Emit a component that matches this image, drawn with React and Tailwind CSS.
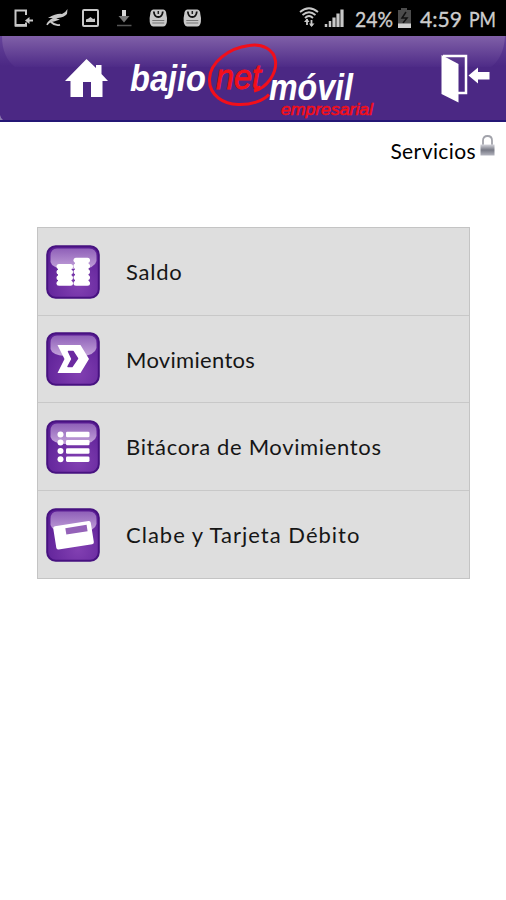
import React from 'react';

function StatusBar() {
  return (
    <div className="flex h-9 items-center bg-black">
      <svg className="block" width="506" height="36" viewBox="0 0 506 36" fill="none" stroke="#c8c8c8">
        {/* device with incoming arrow */}
        <path d="M26 15V10.500H15.500V25.500H26V22.500" strokeWidth="2" />
        <path d="M15 25.300H27" strokeWidth="2.600" />
        <path d="M33 20.500H28" strokeWidth="2" />
        <path d="M25 20.500L29.500 17V24Z" fill="#c8c8c8" stroke="none" />
        {/* swoosh */}
        <path d="M67.500 9L67 14Q64 17.500 58 18Q50 19 47 25Q51 21.500 54 21.500L60 19.500Q56 17.500 48 18Q57 13 62 14Q66 12 67.500 9Z" fill="#c8c8c8" stroke="none" />
        <path d="M47 24.800Q50 19 58 17M51 22Q55 26 60 24.800" strokeWidth="1.800" />
        {/* picture */}
        <rect x="83" y="10" width="15" height="16" rx="1" strokeWidth="2" />
        <path d="M86 22V19.500L88.500 18.500L90.500 17L93 19L95 18.500V22Z" fill="#c8c8c8" stroke="none" />
        {/* download */}
        <path d="M122 10H126V16H122Z" fill="#d6d6d6" stroke="none" />
        <path d="M118.500 16H129.500L124 22.500Z" fill="#777" stroke="none" />
        <path d="M117 25.500H131.500" stroke="#555" strokeWidth="1.500" />
        {[158.300, 192.300].map((x) => (
          <g key={x} transform={`translate(${x} 18)`} stroke="none">
            <path d="M-5 -8.500H5Q8 -8 8 -4L8.700 0Q9 8.500 5 8.500H-5Q-9 8.500 -8.700 0L-8 -4Q-8 -8 -5 -8.500Z" fill="#c8c8c8" />
            <path d="M-4.500 -6.500Q-4 -1 0 -1T4.500 -6.500" stroke="#111" strokeWidth="1.800" />
            <path d="M0 -7V-4" stroke="#222" strokeWidth="1.500" />
            <path d="M-6 2.500H6M-6 5H6" stroke="#777" />
          </g>
        ))}
        {/* wifi with traffic arrows */}
        <path d="M300 12Q309 4.500 318 12M302.500 15Q309 9.500 315.500 15M305 18Q309 14 313 18" strokeWidth="1.800" />
        <path d="M307 19V25M311.500 20V26" strokeWidth="1.800" />
        <path d="M304 22L307 18.500L309.500 22M309 23.500L311.500 27L314.500 23.500" fill="#c8c8c8" stroke="none" />
        {/* signal */}
        <path d="M326 27V24M330 27V21" strokeWidth="2.500" />
        <path d="M334 27V17.500M338 27V13.500M342 27V9.500" strokeWidth="3.200" />
        <g fill="#cdcdcd" stroke="#cdcdcd" strokeWidth=".35" fontFamily="Lato, sans-serif" fontSize="21">
          <text x="355" y="26.500" textLength="38" lengthAdjust="spacingAndGlyphs">24%</text>
          <text x="420" y="26.500" textLength="42" lengthAdjust="spacingAndGlyphs">4:59</text>
          <text x="469" y="26.500" textLength="27" lengthAdjust="spacingAndGlyphs">PM</text>
        </g>
        {/* battery */}
        <path d="M398 10H401V8H407V10H411V28H398Z" fill="#4c4c4c" stroke="none" />
        <path d="M406 12L402 18H407L403 23" stroke="#111" strokeWidth="1.500" />
        <path d="M398 23.500H411V28H398Z" fill="#d0d0d0" stroke="none" />
      </svg>
    </div>
  );
}

function Header() {
  return (
    <header className="h-[86px] border-b-2 border-[#241675] bg-[#4b2884]">
      <svg className="block" width="506" height="84" viewBox="0 36 506 84">
        <defs>
          <linearGradient id="bar" x1="0" y1="0" x2="0" y2="1">
            <stop offset="0" stopColor="#8060a8" />
            <stop offset="1" stopColor="#4e2b87" />
          </linearGradient>
          <linearGradient id="corner" x1="0" y1="0" x2="0" y2="1">
            <stop offset="0" stopColor="#66449a" />
            <stop offset="1" stopColor="#4b2884" />
          </linearGradient>
        </defs>
        <rect x="0" y="36" width="506" height="30" fill="url(#corner)" />
        <path d="M2 36H505Q504 57 491 67H15Q2 57 2 36Z" fill="url(#bar)" />
        <path d="M0 115Q1 119 3 120H0Z" fill="#8d7aaf" />
        {/* home */}
        <path d="M86.500 59L96 68V65H101.500V74L108 81H102.500V97H91V82H83V97H70.500V81H65Z" fill="#fff" />
        {/* brand */}
        <path d="M254 91C267 88 277 73 275.500 61C274 49 262 43.500 249 45.500C229 48 210 62 209.500 79C209 96 224 104 238 104.500C251 105 263 101 269 94.500" fill="none" stroke="#f20f1a" strokeWidth="3" />
        <g fontFamily="'Liberation Sans', sans-serif" fontStyle="italic">
          <text x="130" y="91" fontSize="37" fontWeight="700" fill="#fff" textLength="76" lengthAdjust="spacingAndGlyphs">bajio</text>
          <text x="216" y="89" fontSize="35" fill="#f20f1a" stroke="#f20f1a" strokeWidth=".9" textLength="45" lengthAdjust="spacingAndGlyphs">net</text>
          <text x="269" y="100" fontSize="36" fontWeight="700" fill="#fff" textLength="84" lengthAdjust="spacingAndGlyphs">móvil</text>
          <text x="281" y="114.500" fontSize="16.500" fill="#f20f1a" stroke="#f20f1a" strokeWidth=".6" textLength="92" lengthAdjust="spacingAndGlyphs">empresarial</text>
        </g>
        {/* exit door */}
        <path d="M443 56H466V93H458" fill="none" stroke="#fff" strokeWidth="2.500" />
        <path d="M441.500 55L458.500 64V102.500L441.500 94Z" fill="#fff" />
        <path d="M468.500 75.500L478 67.500V72H489.500V79.500H478V83.500Z" fill="#fff" />
      </svg>
    </header>
  );
}

const glyphs = {
  coins: (
    <g fill="#fff">
      {[19, 24.600, 30.200, 35.800].map((y) => <rect key={y} x="10.500" y={y} width="16.500" height="5" rx="2.500" />)}
      {[12.700, 18.500, 24.300, 30.100, 35.800].map((y) => <rect key={y} x="27.500" y={y} width="16.500" height="5" rx="2.500" />)}
      <path d="M12 21H25.500V39H12ZM29 15H42.500V39H29Z" />
    </g>
  ),
  arrow: (
    <g>
      <path d="M11.500 13H34.500L43 27L34.500 41H11.500L18.500 27Z" fill="#fff" />
      <path d="M22.500 19.500H27L31.500 26.500L26 34.500H22L26 27Z" fill="#6b2aa0" stroke="#6b2aa0" strokeWidth="1.500" strokeLinejoin="round" />
    </g>
  ),
  list: (
    <g fill="#fff">
      {[14.500, 22.600, 31, 39.200].map((y) => (
        <g key={y}>
          <circle cx="14.500" cy={y} r="3" />
          <rect x="20" y={y - 2.700} width="23.500" height="5.400" rx="1.300" />
        </g>
      ))}
    </g>
  ),
  card: (
    <g transform="rotate(-9 27.500 27)">
      <rect x="8.500" y="15.500" width="38" height="23.500" rx="2" fill="#fff" />
      <path d="M20.500 19H42V25.500H20.500Z" fill="#9462b8" />
    </g>
  ),
};

function Tile({ name }) {
  return (
    <svg className="h-[54px] w-[54px] shrink-0" viewBox="0 0 54 54">
      <defs>
        <radialGradient id={`base-${name}`} cx=".6" cy=".78" r=".75">
          <stop offset="0" stopColor="#8240b2" />
          <stop offset="1" stopColor="#5c1f96" />
        </radialGradient>
        <linearGradient id={`gloss-${name}`} x1="0" y1="0" x2="0" y2="1">
          <stop offset="0" stopColor="#8f60b8" />
          <stop offset="1" stopColor="#c3a2da" />
        </linearGradient>
      </defs>
      <rect x="1.200" y="1.200" width="51.600" height="51.600" rx="8.500" fill={`url(#base-${name})`} stroke="#471280" strokeWidth="2" />
      <path d="M11 3.500H43Q50.500 3.500 50.500 11V16Q49 23 36 24H19Q6 23 4.500 17V11Q4.500 3.500 11 3.500Z" fill={`url(#gloss-${name})`} />
      {glyphs[name]}
    </svg>
  );
}

function Row({ icon, children }) {
  return (
    <li className="flex h-[87.5px] items-center gap-[26px] border-b border-[#c8c8c8] pl-2 pt-px last:border-b-0">
      <Tile name={icon} />
      {children}
    </li>
  );
}

export default function App() {
  return (
    <div className="min-h-[900px] w-[506px] overflow-hidden bg-white font-['Lato',sans-serif] text-[#161616]">
      <StatusBar />
      <Header />
      <div className="flex h-[105px] items-start justify-end pr-[11px] pt-3">
        <h1 className="mr-1 mt-0.5 text-[21px] leading-[30px] tracking-[0.4px] text-black">Servicios</h1>
        <svg width="15" height="24" viewBox="0 0 15 24">
          <defs>
            <linearGradient id="lock" x1="0" y1="0" x2="0" y2="1">
              <stop offset="0" stopColor="#d5d5dc" />
              <stop offset=".5" stopColor="#777985" />
              <stop offset="1" stopColor="#b4b5bf" />
            </linearGradient>
          </defs>
          <path d="M3 13V6.500Q3 2 7.500 2T12 6.500V13" fill="none" stroke="#a2a3ab" strokeWidth="1.800" />
          <rect x=".5" y="10.500" width="14" height="11" fill="url(#lock)" />
        </svg>
      </div>
      <ul className="ml-[37px] w-[433px] border border-[#c4c4c4] bg-[#dedede] text-[22px]">
        <Row icon="coins"><span className="tracking-[0.75px]">Saldo</span></Row>
        <Row icon="arrow"><span className="tracking-[0.3px]">Movimientos</span></Row>
        <Row icon="list"><span className="tracking-[0.65px]">Bitácora de Movimientos</span></Row>
        <Row icon="card"><span className="tracking-[1px]">Clabe y Tarjeta Débito</span></Row>
      </ul>
    </div>
  );
}
